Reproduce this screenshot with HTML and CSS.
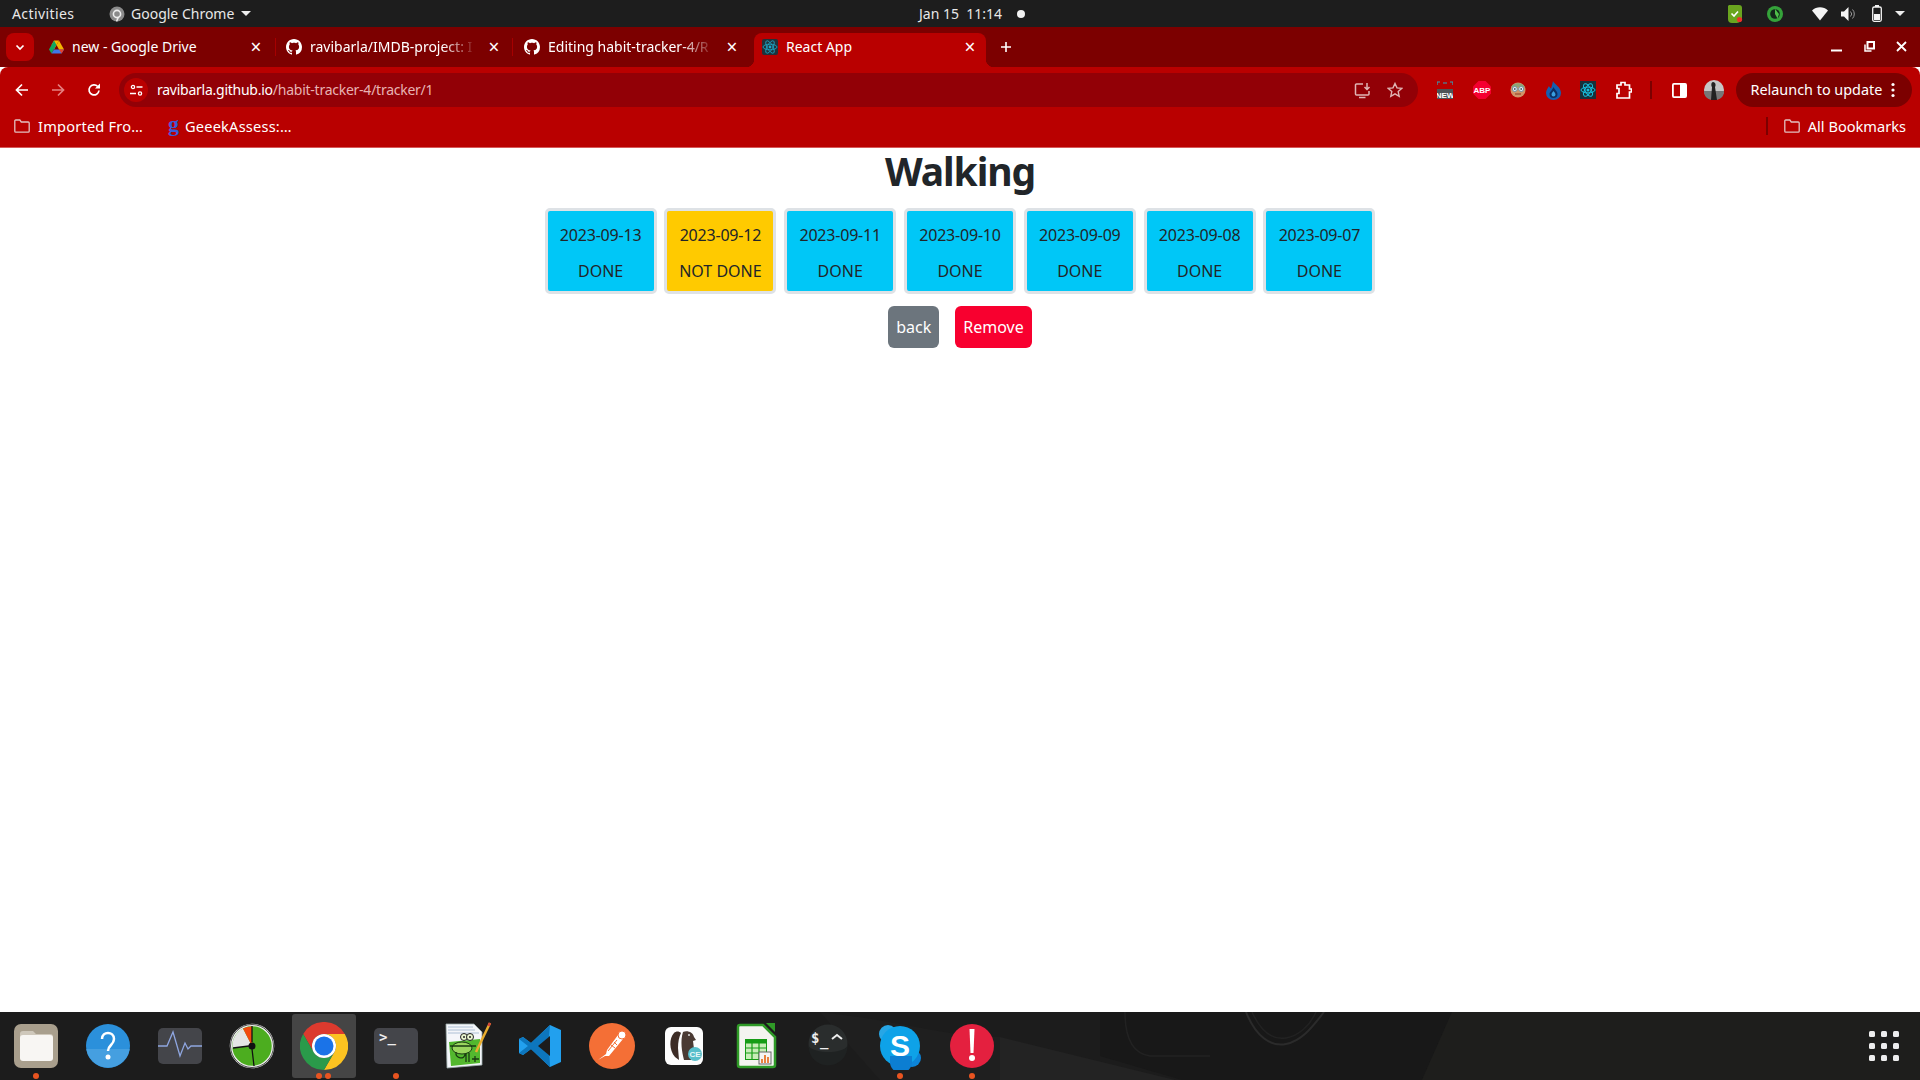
FILE: index.html
```html
<!DOCTYPE html>
<html lang="en">
<head>
<meta charset="utf-8">
<title>React App</title>
<link rel="stylesheet" href="styles.css">
</head>
<body>
<header class="topbar">
  <span class="activities">Activities</span>
  <svg class="appicon" width="16" height="16" viewBox="0 0 16 16"><circle cx="8" cy="8" r="7.5" fill="#8b8b8b"/><circle cx="8" cy="8" r="3.6" fill="none" stroke="#eee" stroke-width="1.6"/><path d="M9.5 11l-2 4.4" stroke="#eee" stroke-width="1.4"/></svg>
  <span class="appname">Google Chrome</span>
  <span class="caret"></span>
  <span class="clock">Jan 15&nbsp; 11:14</span>
  <span class="recdot"></span>
  <div class="tray">
    <svg class="t-shield" width="16" height="18" viewBox="0 0 16 18"><path d="M2 0h10a3 3 0 0 1 3 3v10a5 5 0 0 1-5 5H5a4 4 0 0 1-4-4V1z" fill="#6aa51f"/><path d="M4.5 8.5l2.5 2.5 4-4.5" fill="none" stroke="#fff" stroke-width="1.6"/><circle cx="12.5" cy="14.5" r="2.6" fill="#f0312b"/></svg>
    <svg class="t-clock" width="16" height="16" viewBox="0 0 16 16"><circle cx="8" cy="8" r="8" fill="#35a33a"/><circle cx="8" cy="8" r="4.800" fill="#13281a"/><path d="M8 3v5l2.500 4.500L12 8z" fill="#4fc04a"/></svg>
    <svg class="t-wifi" width="16" height="14" viewBox="0 0 16 14"><path d="M0 3.5C4.500-.7 11.500-.7 16 3.500L8 13.500z" fill="#f4f4f4"/></svg>
    <svg class="t-vol" width="15" height="14" viewBox="0 0 15 14"><path d="M0 4.500h3L7.500 0v14L3 9.500H0z" fill="#f4f4f4"/><path d="M9.500 4.500a3.500 3.500 0 0 1 0 5M11.500 2.500a6.500 6.500 0 0 1 0 9" fill="none" stroke="#999" stroke-width="1"/></svg>
    <svg class="t-batt" width="10" height="17" viewBox="0 0 10 17"><rect x=".7" y="2" width="8.600" height="14.300" rx="1.500" fill="none" stroke="#f4f4f4" stroke-width="1.300"/><rect x="3" y="0" width="4" height="2" fill="#f4f4f4"/><rect x="2" y="9" width="6" height="6" fill="#f4f4f4"/></svg>
    <span class="caret caret-tray"></span>
  </div>
</header>

<div class="tabstrip">
  <button class="tabsearch"><svg width="10" height="7" viewBox="0 0 10 7"><path d="M1.500 1.500L5 5l3.500-3.500" fill="none" stroke="#fff" stroke-width="1.700"/></svg></button>
  <div class="tab tab-first">
    <svg class="fav" width="15" height="14" viewBox="0 0 15 14"><path d="M5 .5h5L7.500 5 5 9.500 2.500 5z" fill="#f6b900"/><path d="M5 .5L0 9.500l2.500 4L7.500 5z" fill="#11a861"/><path d="M2.500 13.500h10l2.500-4H5z" fill="#3f78e8"/><path d="M10 .5l5 9h-5L7.500 5z" fill="#f4b400"/><path d="M10 9.500l2.500 4L15 9.500z" fill="#e5402f"/></svg>
    <span class="tabtitle">new - Google Drive</span>
    <span class="tabx">×</span>
  </div>
  <i class="tabsep"></i>
  <div class="tab tab-mid">
    <svg class="fav" width="16" height="16" viewBox="0 0 16 16"><path fill="#fff" d="M8 0C3.580 0 0 3.580 0 8c0 3.540 2.290 6.530 5.470 7.590.4.070.55-.17.550-.38 0-.19-.01-.82-.01-1.490-2.010.37-2.530-.49-2.690-.94-.09-.23-.48-.94-.82-1.130-.28-.15-.68-.52-.01-.53.63-.01 1.080.58 1.230.82.720 1.210 1.870.87 2.330.66.070-.52.280-.87.510-1.070-1.780-.2-3.640-.89-3.640-3.950 0-.87.310-1.590.820-2.150-.08-.2-.36-1.020.08-2.120 0 0 .67-.21 2.200.82.640-.18 1.320-.27 2-.27s1.360.09 2 .27c1.530-1.040 2.200-.82 2.200-.82.440 1.100.160 1.920.080 2.120.51.560.820 1.270.820 2.150 0 3.070-1.870 3.750-3.650 3.950.290.250.540.730.540 1.480 0 1.070-.01 1.930-.01 2.200 0 .210.150.460.550.380A8.010 8.010 0 0 0 16 8c0-4.420-3.580-8-8-8z"/></svg>
    <span class="tabtitle fade">ravibarla/IMDB-project: I</span>
    <span class="tabx">×</span>
  </div>
  <i class="tabsep"></i>
  <div class="tab tab-mid tab-third">
    <svg class="fav" width="16" height="16" viewBox="0 0 16 16"><path fill="#fff" d="M8 0C3.580 0 0 3.580 0 8c0 3.540 2.290 6.530 5.470 7.590.4.070.55-.17.550-.38 0-.19-.01-.82-.01-1.490-2.010.37-2.530-.49-2.690-.94-.09-.23-.48-.94-.82-1.130-.28-.15-.68-.52-.01-.53.63-.01 1.080.58 1.230.82.720 1.210 1.870.87 2.330.66.070-.52.280-.87.510-1.070-1.780-.2-3.640-.89-3.640-3.950 0-.87.310-1.590.820-2.150-.08-.2-.36-1.020.08-2.120 0 0 .67-.21 2.200.82.640-.18 1.320-.27 2-.27s1.360.09 2 .27c1.530-1.040 2.200-.82 2.200-.82.440 1.100.160 1.920.080 2.120.51.560.820 1.270.820 2.150 0 3.070-1.870 3.750-3.650 3.950.290.250.540.730.540 1.480 0 1.070-.01 1.930-.01 2.200 0 .210.150.460.550.380A8.010 8.010 0 0 0 16 8c0-4.420-3.580-8-8-8z"/></svg>
    <span class="tabtitle fade">Editing habit-tracker-4/R</span>
    <span class="tabx">×</span>
  </div>
  <div class="tab tab-active">
    <svg class="fav" width="16" height="16" viewBox="0 0 16 16"><rect width="16" height="16" rx="2" fill="#20323a"/><g fill="none" stroke="#1ba9c9" stroke-width=".8"><ellipse cx="8" cy="8" rx="7" ry="2.800"/><ellipse cx="8" cy="8" rx="7" ry="2.800" transform="rotate(60 8 8)"/><ellipse cx="8" cy="8" rx="7" ry="2.800" transform="rotate(120 8 8)"/></g><circle cx="8" cy="8" r="1.400" fill="#1ba9c9"/></svg>
    <span class="tabtitle">React App</span>
    <span class="tabx">×</span>
  </div>
  <svg class="newtab" width="12" height="12" viewBox="0 0 12 12"><path d="M6 1v10M1 6h10" stroke="#fff" stroke-width="1.600"/></svg>
  <div class="winctl">
    <svg width="11" height="11" viewBox="0 0 11 11"><rect y="8.500" width="11" height="2" fill="#fff"/></svg>
    <svg width="11" height="11" viewBox="0 0 11 11"><path d="M3.500 1h6.500v6.500H3.500z" fill="none" stroke="#fff" stroke-width="2"/><path d="M1 3.500V10h6.500" fill="none" stroke="#fff" stroke-width="1.500"/></svg>
    <svg width="11" height="11" viewBox="0 0 11 11"><path d="M1 1l9 9M10 1l-9 9" stroke="#fff" stroke-width="1.800"/></svg>
  </div>
</div>

<div class="toolbar">
  <svg class="nav nav-back" width="14" height="14" viewBox="0 0 14 14"><path d="M13 7H2M7 1.500L1.500 7 7 12.500" fill="none" stroke="#fff" stroke-width="1.700"/></svg>
  <svg class="nav nav-fwd" width="14" height="14" viewBox="0 0 14 14"><path d="M1 7h11M7 1.500L12.500 7 7 12.500" fill="none" stroke="#e58080" stroke-width="1.700"/></svg>
  <svg class="nav nav-reload" width="14" height="14" viewBox="0 0 14 14"><path d="M12 7.500a5 5 0 1 1-1.300-4" fill="none" stroke="#fff" stroke-width="1.700"/><path d="M13 .5v5H8z" fill="#fff"/></svg>
  <div class="omnibox">
    <span class="sitebtn"><svg width="13" height="13" viewBox="0 0 13 13"><g fill="none" stroke="#fff" stroke-width="1.300"><circle cx="3" cy="3" r="1.600"/><path d="M6.500 3h6M0 9.500h6"/><circle cx="10" cy="9.500" r="1.600"/></g></svg></span>
    <span class="url">ravibarla.github.io<span class="urlpath">/habit-tracker-4/tracker/1</span></span>
    <svg class="omni-a" width="17" height="17" viewBox="0 0 17 17"><path d="M9 2H2.500a1 1 0 0 0-1 1v9a1 1 0 0 0 1 1H14a1 1 0 0 0 1-1V9M5 15.500h6.500M13 1v6M10.500 5l2.500 2.500L15.500 5" fill="none" stroke="#e0b5b5" stroke-width="1.500"/></svg>
    <svg class="omni-b" width="16" height="16" viewBox="0 0 16 16"><path d="M8 1.500l2 4.400 4.700.5-3.500 3.200 1 4.700L8 11.900l-4.200 2.400 1-4.700L1.300 6.400 6 5.900z" fill="none" stroke="#e0b5b5" stroke-width="1.400"/></svg>
  </div>
  <div class="exts">
    <svg width="16" height="18" viewBox="0 0 16 18"><rect y="8" width="16" height="10" fill="#4e5457"/><path d="M0 4V1h3M13 1h3v3M6 2h4" fill="none" stroke="#2ea3bd" stroke-width="1.200"/><text x="8" y="16.500" class="tx-new">NEW</text></svg>
    <svg width="18" height="18" viewBox="0 0 18 18"><path d="M5.500 0h7L18 5.500v7L12.500 18h-7L0 12.500v-7z" fill="#f5002f"/><text x="9" y="12" class="tx-abp">ABP</text></svg>
    <svg width="16" height="18" viewBox="0 0 16 18"><circle cx="8" cy="9" r="7.500" fill="#d19468"/><path d="M1 6a7.500 6 0 0 1 14 0z" fill="#8fa276"/><circle cx="4.800" cy="8" r="2.500" fill="#e8eef2" stroke="#6d92a3"/><circle cx="11.200" cy="8" r="2.500" fill="#e8eef2" stroke="#6d92a3"/><circle cx="4.800" cy="8" r=".9" fill="#456"/><circle cx="11.200" cy="8" r=".9" fill="#456"/><path d="M5 13h6" stroke="#a5573a" stroke-width="1.500"/></svg>
    <svg width="15" height="19" viewBox="0 0 15 19"><path d="M7 0c1 3 8 6 8 12a7.500 7 0 0 1-15 0C0 9 2 7 3 5c.5 1.500 1.500 2 2 2.500C6 5 6.500 2.500 7 0z" fill="#155fb0"/><path d="M7.500 6c.5 2 4 4 4 7a4 4 0 0 1-8 0c0-2 3-4 4-7z" fill="#0e2e63"/><path d="M7.500 10c.5 1 2 2 2 3.500a2 2 0 0 1-4 0c0-1.500 1.500-2.500 2-3.500z" fill="#3a9ee0"/></svg>
    <svg width="16" height="18" viewBox="0 0 16 18"><rect width="16" height="18" fill="#18303a"/><g fill="none" stroke="#17c0e0" stroke-width="1"><ellipse cx="8" cy="9" rx="7" ry="2.900"/><ellipse cx="8" cy="9" rx="7" ry="2.900" transform="rotate(60 8 9)"/><ellipse cx="8" cy="9" rx="7" ry="2.900" transform="rotate(120 8 9)"/></g><circle cx="8" cy="9" r="1.500" fill="#17c0e0"/></svg>
    <svg width="16" height="18" viewBox="0 0 16 18"><path d="M1 4h4V1.500h4V4h4.500v4H15.500v3h-2v6H1v-4.500h2v-5H1z" fill="none" stroke="#fff" stroke-width="1.700"/></svg>
    <i class="toolsep"></i>
    <svg width="15" height="15" viewBox="0 0 15 15"><rect x=".9" y=".9" width="13.200" height="13.200" rx="1" fill="none" stroke="#fff" stroke-width="1.800"/><rect x="8" y="1" width="6" height="13" fill="#fff"/></svg>
    <svg class="avatar" width="20" height="24" viewBox="0 0 20 24"><circle cx="10" cy="12" r="10" fill="#c6c6c6"/><path d="M0 13h20c0 6-4 9-10 9S0 19 0 13z" fill="#777"/><path d="M9 4c3 0 3 4 2 5l2 13H7l1-13C7 8 7 4 9 4z" fill="#222"/></svg>
    <div class="relaunch"><span>Relaunch to update</span><svg width="4" height="16" viewBox="0 0 4 16"><circle cx="2" cy="2.500" r="1.600" fill="#fff"/><circle cx="2" cy="8" r="1.600" fill="#fff"/><circle cx="2" cy="13.500" r="1.600" fill="#fff"/></svg></div>
  </div>
</div>

<nav class="bookmarks">
  <svg class="bm-folder" width="16" height="14" viewBox="0 0 16 14"><path d="M.8 12.200V2a1 1 0 0 1 1-1h4l1.500 2h6.900a1 1 0 0 1 1 1v8.200a1 1 0 0 1-1 1H1.800a1 1 0 0 1-1-1z" fill="none" stroke="#e3c0c0" stroke-width="1.300"/></svg>
  <span class="bm bm-one">Imported Fro…</span>
  <span class="bm-g">g</span>
  <span class="bm bm-two">GeeekAssess:…</span>
  <i class="bmsep"></i>
  <svg class="bm-folder" width="16" height="14" viewBox="0 0 16 14"><path d="M.8 12.200V2a1 1 0 0 1 1-1h4l1.500 2h6.900a1 1 0 0 1 1 1v8.200a1 1 0 0 1-1 1H1.800a1 1 0 0 1-1-1z" fill="none" stroke="#e3c0c0" stroke-width="1.300"/></svg>
  <span class="bm">All Bookmarks</span>
</nav>

<main class="page">
  <h1 class="title">Walking</h1>
  <div class="days">
    <div class="day done"><p>2023-09-13</p><p>DONE</p></div>
    <div class="day notdone"><p>2023-09-12</p><p>NOT DONE</p></div>
    <div class="day done"><p>2023-09-11</p><p>DONE</p></div>
    <div class="day done"><p>2023-09-10</p><p>DONE</p></div>
    <div class="day done"><p>2023-09-09</p><p>DONE</p></div>
    <div class="day done"><p>2023-09-08</p><p>DONE</p></div>
    <div class="day done"><p>2023-09-07</p><p>DONE</p></div>
  </div>
  <div class="actions">
    <button class="btn btn-back">back</button>
    <button class="btn btn-remove">Remove</button>
  </div>
</main>

<footer class="dock">
  <svg class="wallpaper" width="1920" height="68" viewBox="0 0 1920 68"><path d="M1000 25L1175 68H1000z" fill="#232323"/><path d="M1100 0h352l-30 68h-240l-82-24z" fill="#181818"/><path d="M1125 0c0 30 10 42 25 44h60" fill="none" stroke="#222" stroke-width="1.500"/><path d="M1246 0c10 25 25 35 40 32 15-3 25-15 38-32" fill="none" stroke="#2b2b2b" stroke-width="2"/><path d="M1252 0c10 22 22 28 34 26 12-2 24-12 30-26" fill="none" stroke="#222" stroke-width="1.500"/><path d="M1452 0h468v68h-498z" fill="#1e1e1c"/><path d="M820 0c90 10 130 26 180 25v43H880z" fill="#1f1f1f"/></svg>
  <div class="dockitem dot1">
    <svg width="48" height="48" viewBox="0 0 48 48"><rect x="2" y="2" width="44" height="44" rx="7" fill="#a99f8d"/><path d="M8 12a3 3 0 0 1 3-3h10l3 3h14a3 3 0 0 1 3 3v19a3 3 0 0 1-3 3H11a3 3 0 0 1-3-3z" fill="#cfc8bb"/><path d="M8 16a3 3 0 0 1 3-3h27a3 3 0 0 1 3 3v20a3 3 0 0 1-3 3H11a3 3 0 0 1-3-3z" fill="#f8f6f3"/></svg>
  </div>
  <div class="dockitem">
    <svg width="48" height="48" viewBox="0 0 48 48"><circle cx="24" cy="24" r="22" fill="#2b90db"/><path d="M2.300 27h43.400a22 22 0 0 1-43.400 0z" fill="#459fe0"/><path d="M18 17c0-8 12-8 12 0 0 6-6 6-6 12" fill="none" stroke="#fff" stroke-width="2.500"/><circle cx="24" cy="35" r="2.500" fill="#fff"/></svg>
  </div>
  <div class="dockitem">
    <svg width="48" height="48" viewBox="0 0 48 48"><rect x="2" y="6" width="44" height="36" rx="5" fill="#44454a"/><path d="M2 24h9l6-14 7 24 5-13 3 6 3-3h11" fill="none" stroke="#8fa6e0" stroke-width="1.300"/></svg>
  </div>
  <div class="dockitem">
    <svg width="48" height="48" viewBox="0 0 48 48"><circle cx="24" cy="24" r="21" fill="#4cad1f" stroke="#f0f0f0" stroke-width="2.500"/><circle cx="24" cy="24" r="21.500" fill="none" stroke="#222" stroke-width=".8"/><path d="M24 24L4.500 26A19.500 19.500 0 0 1 15 6.500z" fill="#e5e5e5"/><path d="M24 24L15 6.500A19.500 19.500 0 0 1 24 4.500z" fill="#f3490f"/><path d="M24 4v16M24 27l2 17M21 24l-16 2" stroke="#111" stroke-width="1.300"/><circle cx="24" cy="24" r="3.500" fill="#111"/></svg>
  </div>
  <div class="dockitem dockactive dot2">
    <svg width="48" height="48" viewBox="0 0 48 48"><path d="M3.200 12A24 24 0 0 1 44.800 12H24a12 12 0 0 0-10.400 18z" fill="#dc3a2e"/><path d="M44.800 12A24 24 0 0 1 24 48L34.400 30A12 12 0 0 0 24 12z" fill="#fcc321"/><path d="M24 48A24 24 0 0 1 3.200 12L13.600 30A12 12 0 0 0 34.400 30z" fill="#2a9a4a"/><circle cx="24" cy="24" r="12" fill="#fff"/><circle cx="24" cy="24" r="9.500" fill="#1a73e8"/></svg>
  </div>
  <div class="dockitem dot1">
    <svg width="48" height="48" viewBox="0 0 48 48"><rect x="2" y="6" width="44" height="36" rx="5" fill="#44454a"/><text x="7" y="20" class="tx-term">&gt;_</text></svg>
  </div>
  <div class="dockitem">
    <svg width="48" height="48" viewBox="0 0 48 48"><path d="M2 2h28l8 8v33L3 46z" fill="#f4f6fa" stroke="#9aa" stroke-width=".8"/><path d="M4 5h25M4 8h27M4 11h31" stroke="#9db4cc" stroke-width=".8"/><path d="M5 20l31-3v24L7 44z" fill="#53b82e"/><ellipse cx="18" cy="26" rx="10" ry="6" fill="#9ad55e" stroke="#1a3a12" stroke-width="1"/><circle cx="20" cy="15" r="3.500" fill="#e8f4cf" stroke="#222"/><circle cx="26" cy="15" r="3.500" fill="#e8f4cf" stroke="#222"/><circle cx="20" cy="15" r="1" fill="#222"/><circle cx="26" cy="15" r="1" fill="#222"/><path d="M6 24h26M12 30c-1 7 9 8 9 2M22 31v9M25 31v9M28 37h7M31 34v6" fill="none" stroke="#1a3a12" stroke-width="1.300"/><path d="M46 1L32 30" stroke="#e9ad2e" stroke-width="2.500"/><path d="M46 1l-1.500 3" stroke="#d8443a" stroke-width="2.500"/></svg>
  </div>
  <div class="dockitem">
    <svg width="48" height="48" viewBox="0 0 48 48"><path d="M34 3l11 5v32l-11 5-19-18-8 6-4-2V17l4-2 8 6z" fill="#22a0ee"/><path d="M34 3L15 21 7 15l-4 2 9 7-9 7 4 2 8-6 19 18-1-20V14z" fill="#0d76bd"/><path d="M34 14L22 24l12 10z" fill="#1c1c1c"/></svg>
  </div>
  <div class="dockitem">
    <svg width="48" height="48" viewBox="0 0 48 48"><circle cx="24" cy="24" r="23" fill="#f46f36"/><path d="M10 38l7-4 4 0 14-17c2-4-1-7-5-4L19 28l-1 4z" fill="#fff"/><circle cx="34" cy="13" r="4" fill="#fff" stroke="#f46f36"/><path d="M20 29l9-11M23 23l4 3M26 20l3 3" stroke="#f46f36" fill="none"/></svg>
  </div>
  <div class="dockitem">
    <svg width="48" height="48" viewBox="0 0 48 48"><rect x="5" y="5" width="38" height="38" rx="6" fill="#fdfdfd"/><path d="M14 11c-5 5-5 17 1 24l4 3-1-12c0-6 1-11 3-15 -2-2-5-2-7 0z" fill="#3d2c26"/><path d="M23 10c4-2 10 0 11 5l2 3-3 1 1 8-3 11h-7c-2-8-4-19-1-28z" fill="#4a3a33"/><circle cx="29" cy="13" r="1" fill="#ddd"/><circle cx="35" cy="32" r="7" fill="#58bfcb"/><text x="35" y="35" class="tx-ce">CE</text></svg>
  </div>
  <div class="dockitem">
    <svg width="48" height="48" viewBox="0 0 48 48"><path d="M8 3h23l12 12v28a2 2 0 0 1-2 2H8a2 2 0 0 1-2-2V5a2 2 0 0 1 2-2z" fill="#f4f4f0" stroke="#2f9a27" stroke-width="2.500"/><path d="M34 1h9v9z" fill="#2f9a27"/><rect x="13" y="17" width="22" height="21" fill="#179c16"/><path d="M14 21h20v16H14z" fill="#c9edb8"/><path d="M13 21h22M13 26h22M13 31h22M20 17v21M27 17v21" stroke="#179c16" stroke-width="1.200"/><rect x="27" y="30" width="12" height="12" fill="#f4f4f4" stroke="#666"/><path d="M30 41v-4M33 41v-8M36 41v-6" stroke="#e8762c" stroke-width="1.800"/></svg>
  </div>
  <div class="dockitem">
    <svg width="48" height="48" viewBox="0 0 48 48"><circle cx="24" cy="22" r="19.500" fill="#2a2d2d"/><path d="M4.500 24a19.500 19.500 0 0 0 39 0c-6 8-32 8-39 0z" fill="#1f2222"/><text x="7" y="21" class="tx-guake">$</text><text x="16" y="24" class="tx-guake">_</text><path d="M28 17l5-4 5 4" fill="none" stroke="#eee" stroke-width="2"/></svg>
  </div>
  <div class="dockitem dot1">
    <svg width="48" height="48" viewBox="0 0 48 48"><circle cx="12" cy="12" r="9" fill="#27a6e5"/><circle cx="36" cy="36" r="9" fill="#0c84d8"/><circle cx="24" cy="24" r="20" fill="#0ea2e8"/><path d="M14 34h22v6a8 8 0 0 1-22 0z" fill="#0c7ed2"/><text x="24" y="34" class="tx-skype">S</text></svg>
  </div>
  <div class="dockitem dot1">
    <svg width="48" height="48" viewBox="0 0 48 48"><circle cx="24" cy="24" r="22" fill="#e4203f"/><path d="M21.500 7h5l-1 24h-3z" fill="#fff"/><circle cx="24" cy="36" r="3" fill="#fff"/></svg>
  </div>
  <svg class="appsgrid" width="30" height="30" viewBox="0 0 30 30"><g fill="#eee"><rect x="0" y="0" width="6" height="6" rx="1.500"/><rect x="12" y="0" width="6" height="6" rx="1.500"/><rect x="24" y="0" width="6" height="6" rx="1.500"/><rect x="0" y="12" width="6" height="6" rx="1.500"/><rect x="12" y="12" width="6" height="6" rx="1.500"/><rect x="24" y="12" width="6" height="6" rx="1.500"/><rect x="0" y="24" width="6" height="6" rx="1.500"/><rect x="12" y="24" width="6" height="6" rx="1.500"/><rect x="24" y="24" width="6" height="6" rx="1.500"/></g></svg>
</footer>
</body>
</html>
```

FILE: styles.css
```css
* { box-sizing: border-box; }
html, body { height: 100%; }
body {
  margin: 0;
  height: 1080px;
  overflow: hidden;
  display: flex;
  flex-direction: column;
  background: #fff;
  color: #212529;
  font-family: "Noto Sans", "Liberation Sans", sans-serif;
}

/* GNOME top bar */
.topbar {
  height: 27px;
  flex: none;
  display: flex;
  align-items: center;
  background: #1d1d1d;
  color: #e8e8e8;
  font-size: 14px;
  position: relative;
}
.activities { margin-left: 12px; width: 97px; letter-spacing: .4px; }
.appicon { flex: none; }
.appname { margin-left: 6px; width: 108px; }
.caret {
  width: 0; height: 0;
  margin-left: 2px;
  border-left: 5px solid transparent;
  border-right: 5px solid transparent;
  border-top: 5px solid #eee;
}
.clock { margin-left: 668px; width: 96px; white-space: nowrap; font-size: 14px; }
.recdot { width: 8px; height: 8px; margin-left: 2px; border-radius: 50%; background: #f2f2f2; }
.tray { margin-left: auto; display: flex; align-items: center; padding-right: 15px; }
.t-clock { margin-left: 24px; }
.t-wifi { margin-left: 29px; }
.t-vol { margin-left: 13px; }
.t-batt { margin-left: 16px; }
.caret-tray { margin-left: 13px; }

/* Tab strip */
.tabstrip {
  height: 40px;
  flex: none;
  display: flex;
  align-items: flex-start;
  background: #7c0000;
  color: #fff;
  font-size: 14px;
  padding: 6px 0 0 6px;
}
.tabsearch {
  width: 28px; height: 28px;
  padding: 0;
  border: 0;
  border-radius: 8px;
  background: #b90000;
  display: flex; align-items: center; justify-content: center;
  flex: none;
}
.tab {
  height: 34px;
  display: flex;
  align-items: center;
  flex: none;
  padding-bottom: 6px;
  white-space: nowrap;
}
.tab-first { width: 226px; margin-left: 15px; }
.tab-mid { width: 236px; padding-left: 10px; }
.tab-third { width: 241px; padding-left: 11px; }
.tabsep { width: 1px; height: 18px; margin-top: 5px; background: #a60000; flex: none; }
.fav { flex: none; margin-right: 8px; }
.tabtitle { flex: 1; min-width: 0; margin-bottom: 1px; }
.fade {
  -webkit-mask-image: linear-gradient(to right, #000 76%, transparent 96%);
  mask-image: linear-gradient(to right, #000 76%, transparent 96%);
}
.tabx {
  width: 20px;
  flex: none;
  text-align: center;
  font-size: 19px;
  line-height: 20px;
  margin-right: 9px;
}
.tab-mid .tabx { margin-right: 8px; }
.tab-third .tabx { margin-right: 12px; }
.tab-active {
  width: 232px;
  padding-left: 8px;
  padding-bottom: 6px;
  border-radius: 8px 8px 0 0;
  background: #b90000;
  position: relative;
}
.tab-active .tabx { margin-right: 6px; }
.tab-active::before, .tab-active::after {
  content: "";
  position: absolute;
  bottom: 0;
  width: 8px; height: 8px;
}
.tab-active::before { left: -8px; background: radial-gradient(circle at 0 0, transparent 8px, #b90000 8.5px); }
.tab-active::after { right: -8px; background: radial-gradient(circle at 100% 0, transparent 8px, #b90000 8.5px); }
.newtab { flex: none; margin: 8px 0 0 14px; }
.winctl { margin-left: auto; display: flex; gap: 21.500px; padding: 8px 13px 0 0; }

/* Toolbar */
.toolbar {
  height: 46px;
  flex: none;
  display: flex;
  align-items: flex-start;
  background: #b90000;
  border-radius: 8px 8px 0 0;
  color: #fff;
  padding-top: 6px;
}
.nav { flex: none; margin-top: 10px; }
.nav-back { margin-left: 15px; }
.nav-fwd { margin-left: 22px; }
.nav-reload { margin-left: 22px; }
.omnibox {
  width: 1299px;
  height: 34px;
  margin-left: 18px;
  display: flex;
  align-items: center;
  background: #920006;
  border-radius: 17px;
  flex: none;
}
.sitebtn {
  width: 24px; height: 24px;
  margin-left: 5px;
  border-radius: 50%;
  background: #b90000;
  display: flex; align-items: center; justify-content: center;
  flex: none;
}
.url { margin: 0 0 2px 9px; font-size: 14px; letter-spacing: -.25px; white-space: nowrap; }
.urlpath { color: #e7b3b3; }
.omni-a { margin-left: auto; }
.omni-b { margin: 0 15px 0 16px; }
.exts { flex: 1; display: flex; align-items: center; height: 34px; padding-left: 19px; }
.exts > svg { flex: none; }
.exts > svg + svg { margin-left: 19.500px; }
.toolsep { width: 2px; height: 18px; margin: 0 20px 0 18px; background: #7c0000; flex: none; }
.exts > .toolsep + svg { margin-left: 0; }
.exts > .avatar { margin-left: 17px; }
.relaunch {
  margin-left: 12px;
  width: 176px;
  height: 34px;
  border-radius: 17px;
  background: #7c0000;
  display: flex;
  align-items: center;
  padding-left: 15px;
  font-size: 14.400px;
  white-space: nowrap;
}
.relaunch span { margin-bottom: 2px; }
.relaunch svg { margin-left: 9px; flex: none; }

/* Bookmarks */
.bookmarks {
  height: 35px;
  flex: none;
  display: flex;
  align-items: center;
  background: #b90000;
  border-bottom: 1px solid #d65a5a;
  color: #fff;
  font-size: 14.600px;
  padding: 0 14px 8px 14px;
}
.bm { white-space: nowrap; }
.bm-folder { flex: none; margin-right: 8px; }
.bm-one { width: 130px; letter-spacing: .2px; }
.bm-two { letter-spacing: .2px; }
.bm-g { color: #3b5bd6; font: 700 22px/20px "Liberation Serif", serif; width: 17px; margin-bottom: 4px; }
.bmsep { width: 2px; height: 18px; margin: 0 16px 0 auto; background: #7c0000; }

/* Page */
.page {
  flex: 1;
  min-height: 0;
  display: flex;
  flex-direction: column;
  align-items: center;
}
.title { margin: -1px 0 9px; font-size: 39px; line-height: 48px; font-weight: 700; letter-spacing: -1.100px; }
.days { display: flex; gap: 7.800px; margin: 4px 0 12px; }
.day {
  width: 112px;
  height: 86px;
  padding-top: 12px;
  border: 3px solid #dee2e6;
  border-radius: 5px;
  text-align: center;
  font-size: 16px;
  line-height: 24px;
}
.day p { margin: 0 0 12px; white-space: nowrap; }
.day p:first-child { letter-spacing: -.2px; }
.done { background: #00c7f7; }
.notdone { background: #ffca00; }
.actions { display: flex; gap: 16px; }
.btn {
  height: 42px;
  padding: 0 8px;
  border: 0;
  border-radius: 6px;
  color: #fff;
  font: 16px "Noto Sans", "Liberation Sans", sans-serif;
}
.btn-back { background: #6c757d; }
.btn-remove { background: #f8002f; }

/* Dock */
.dock {
  height: 68px;
  flex: none;
  display: flex;
  align-items: center;
  background: #1c1c1c;
  position: relative;
}
.wallpaper { position: absolute; left: 0; top: 0; }
.dockitem {
  width: 72px;
  height: 64px;
  display: flex;
  align-items: center;
  justify-content: center;
  position: relative;
  flex: none;
}
.dockactive::before {
  content: "";
  position: absolute;
  left: 4px; right: 4px; top: 0; bottom: 0;
  background: #454545;
  border-radius: 3px;
}
.dockitem svg { position: relative; }
.dot1::after, .dot2::after {
  content: "";
  position: absolute;
  bottom: -1px;
  left: 33px;
  width: 6px; height: 6px;
  border-radius: 50%;
  background: #e95420;
}
.dot2::after { left: 28px; box-shadow: 9px 0 0 #e95420; }
.appsgrid { position: absolute; right: 21px; top: 19px; }
.tx-new { font: 700 8px "Liberation Sans", sans-serif; fill: #fff; text-anchor: middle; }
.tx-abp { font: 700 8px "Liberation Sans", sans-serif; fill: #fff; text-anchor: middle; }
.tx-term { font: 700 14px "DejaVu Sans Mono", monospace; fill: #eee; }
.tx-ce { font: 700 8px "Liberation Sans", sans-serif; fill: #e8f7f8; text-anchor: middle; }
.tx-guake { font: 700 14px "DejaVu Sans Mono", monospace; fill: #eee; }
.tx-skype { font: 700 30px "Liberation Sans", sans-serif; fill: #fff; text-anchor: middle; }
```
